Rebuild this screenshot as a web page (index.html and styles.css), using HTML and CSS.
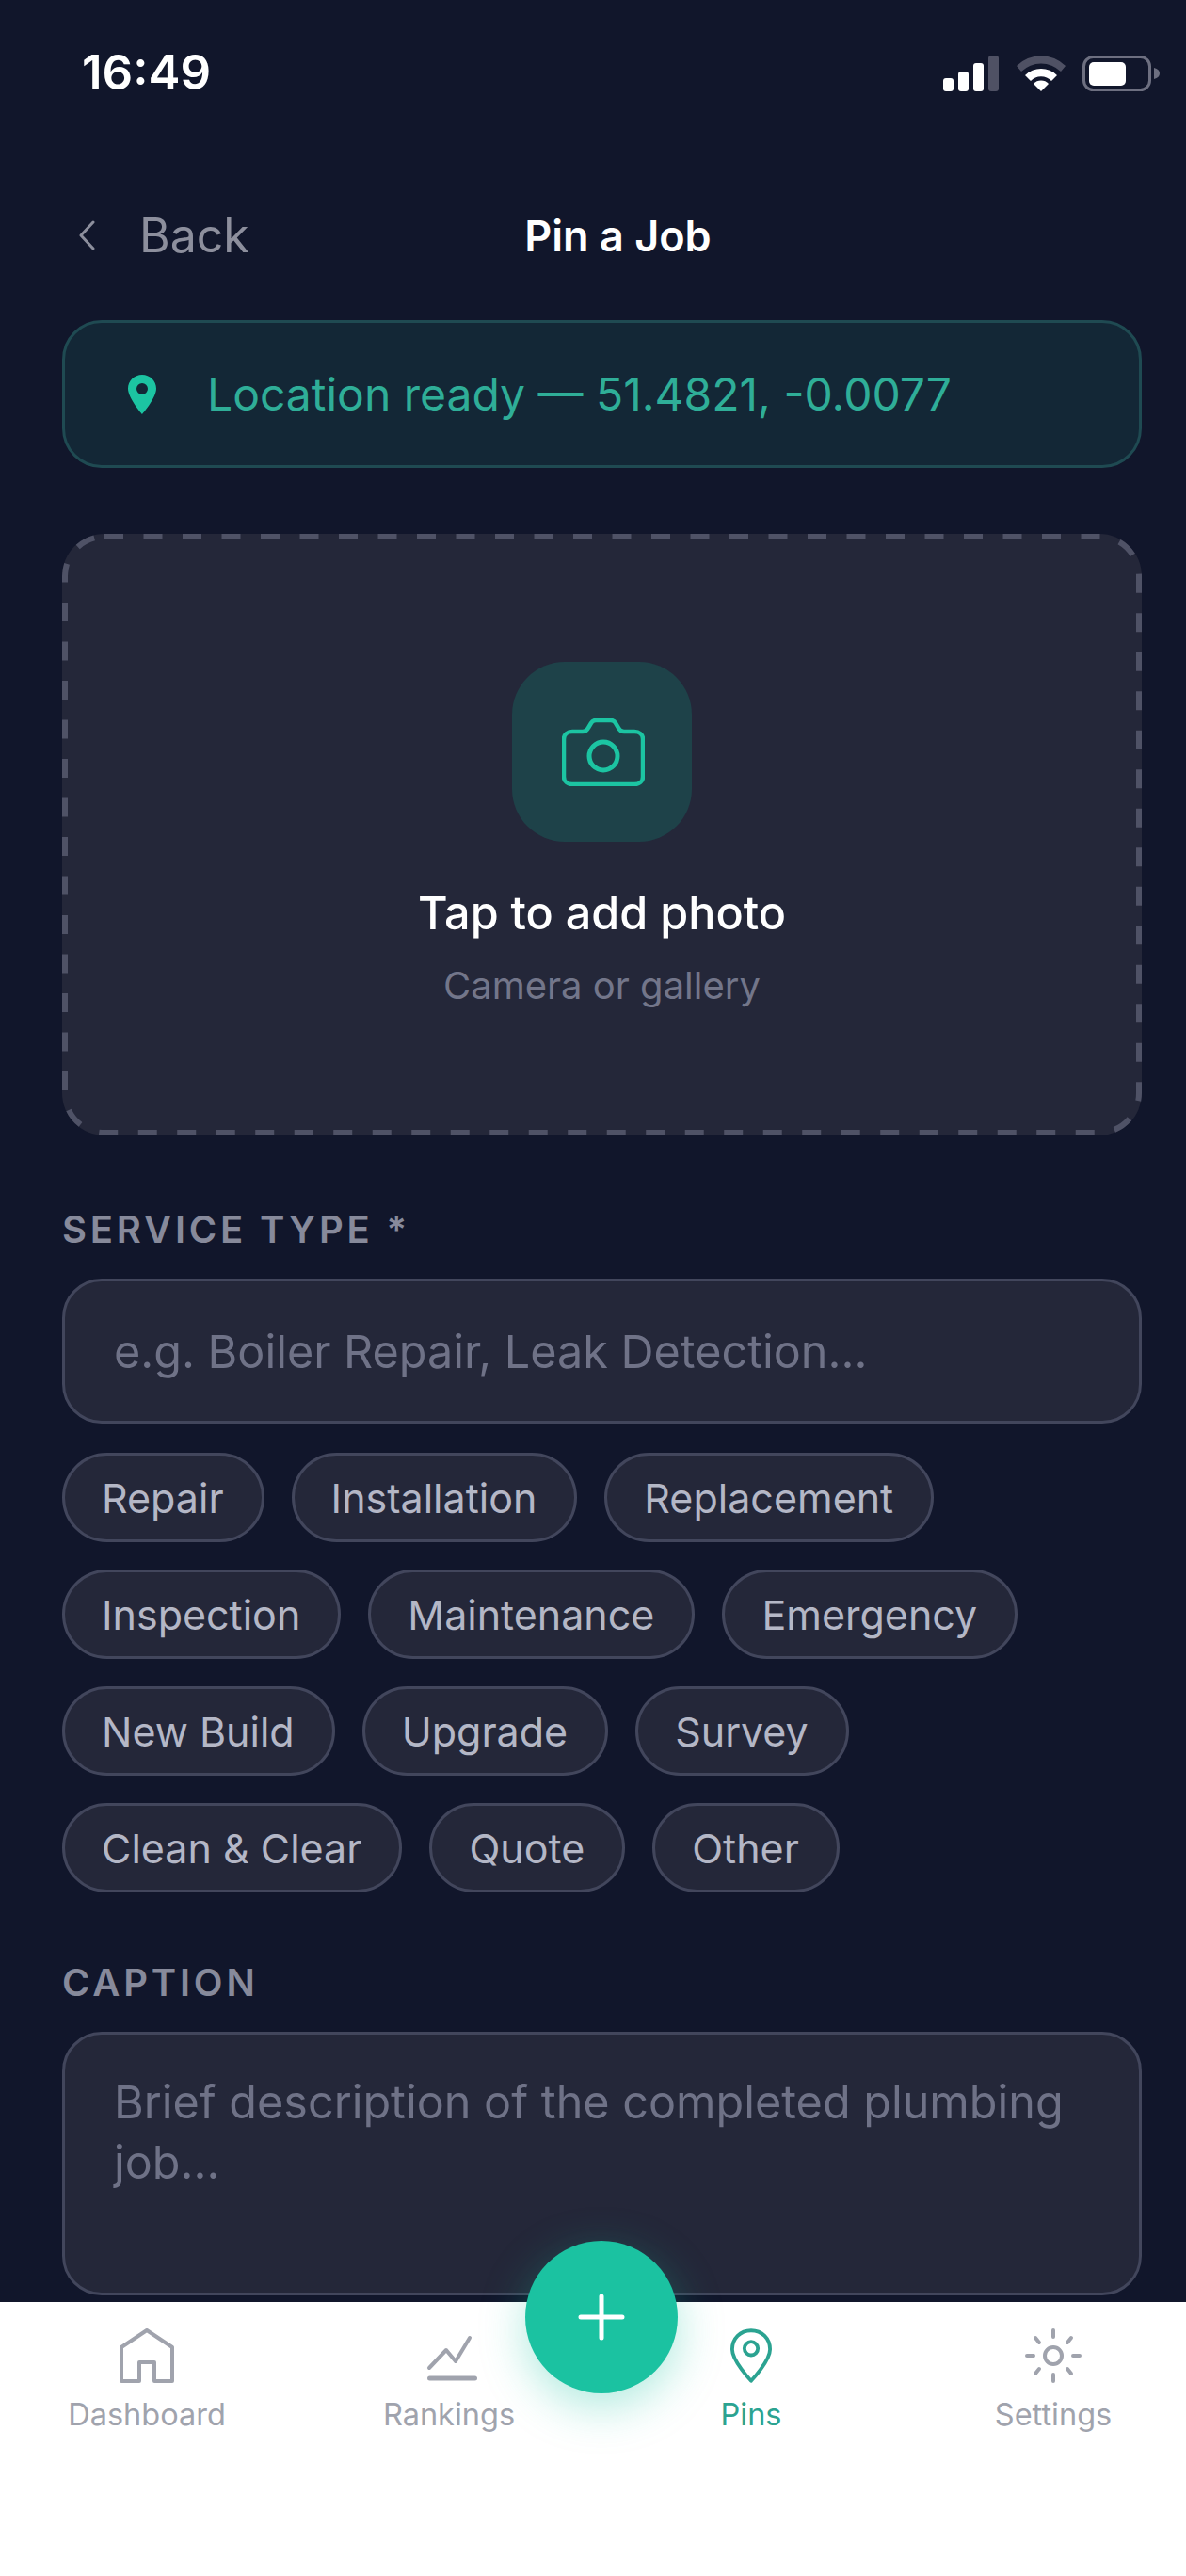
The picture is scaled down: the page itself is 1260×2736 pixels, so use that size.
FILE: index.html
```html
<!DOCTYPE html>
<html lang="en">
  <head>
    <meta charset="UTF-8" />
    <meta name="viewport" content="width=device-width, initial-scale=1.0" />
    <title>Pin a Job</title>
    <link rel="stylesheet" href="styles.css">
  </head>
  <body>
    <div class="screen">
      <main class="content">
        <div class="status-bar">
          <span class="time">16:49</span>
          <div class="status-icons">
            <svg width="60" height="38" viewBox="0 0 60 38">
              <rect x="0" y="24" width="11" height="14" rx="3" fill="#fff" />
              <rect x="16" y="17" width="11" height="21" rx="3" fill="#fff" />
              <rect x="32" y="8" width="11" height="30" rx="3" fill="#fff" />
              <rect x="48" y="0" width="11" height="38" rx="3" fill="#4f5164" />
            </svg>
            <svg width="52" height="38" viewBox="0 0 52 38">
              <path d="M0 11 A37 37 0 0 1 52 11 L47 17 A30 30 0 0 0 5 17 Z" fill="#4f5164" />
              <path d="M9 21 A24 24 0 0 1 43 21 L37 27 A15 15 0 0 0 15 27 Z" fill="#fff" />
              <path d="M18 30 A11 11 0 0 1 34 30 L26 38 Z" fill="#fff" />
            </svg>
            <svg width="82" height="38" viewBox="0 0 82 38">
              <rect x="1.5" y="1.5" width="70" height="35" rx="10" fill="none" stroke="#6d6f80" stroke-width="3" />
              <rect x="7" y="7" width="39" height="25" rx="5" fill="#fff" />
              <path d="M76 13 C80 14 82 16 82 19 C82 22 80 24 76 25 Z" fill="#6d6f80" />
            </svg>
          </div>
        </div>

        <header class="nav">
          <a class="back">
            <svg width="20" height="34" viewBox="0 0 20 34">
              <path d="M17 3 L4 17 L17 31" fill="none" stroke="#8d8f9d" stroke-width="3" stroke-linecap="round" stroke-linejoin="round" />
            </svg>
            <span>Back</span>
          </a>
          <h1>Pin a Job</h1>
        </header>

        <div class="location">
          <svg width="30" height="42" viewBox="0 0 30 42">
            <path fill-rule="evenodd" d="M15 0 C6.7 0 0 6.6 0 14.8 C0 25 15 42 15 42 C15 42 30 25 30 14.8 C30 6.6 23.3 0 15 0 Z M15 9 A6 6 0 1 1 15 21 A6 6 0 1 1 15 9 Z" fill="#1cc4a2" />
          </svg>
          <span>Location ready — 51.4821, -0.0077</span>
        </div>

        <div class="photo-box">
          <svg class="photo-dash" width="1147" height="639" viewBox="0 0 1147 639">
            <rect x="3" y="3" width="1141" height="633" rx="42" fill="none" stroke="#4f5266" stroke-width="6" stroke-dasharray="20 21.5" />
          </svg>
          <div class="photo-icon">
            <svg width="88" height="72" viewBox="0 0 88 72">
              <path d="M11 14 H22 C25 14 27 12 28 10 L31 5 C32 3 34 2 36 2 H52 C54 2 56 3 57 5 L60 10 C61 12 63 14 66 14 H77 C82 14 86 17 86 22 V62 C86 67 82 70 77 70 H11 C6 70 2 67 2 62 V22 C2 17 6 14 11 14 Z" fill="none" stroke="#1cc4a2" stroke-width="4.5" stroke-linejoin="round" />
              <circle cx="44" cy="40" r="15" fill="none" stroke="#1cc4a2" stroke-width="5" />
            </svg>
          </div>
          <p class="photo-title">Tap to add photo</p>
          <p class="photo-sub">Camera or gallery</p>
        </div>

        <label class="field-label">SERVICE TYPE *</label>
        <input class="field" type="text" placeholder="e.g. Boiler Repair, Leak Detection..." />

        <div class="chips">
          <span class="chip">Repair</span>
          <span class="chip">Installation</span>
          <span class="chip">Replacement</span>
          <span class="chip">Inspection</span>
          <span class="chip">Maintenance</span>
          <span class="chip">Emergency</span>
          <span class="chip">New Build</span>
          <span class="chip">Upgrade</span>
          <span class="chip">Survey</span>
          <span class="chip">Clean &amp; Clear</span>
          <span class="chip">Quote</span>
          <span class="chip">Other</span>
        </div>

        <label class="field-label caption-label">CAPTION</label>
        <textarea class="field field-area" placeholder="Brief description of the completed plumbing job..."></textarea>
      </main>

      <nav class="tabbar">
        <a class="tab">
          <svg width="60" height="58" viewBox="0 0 60 58">
            <path d="M3 20 L30 2 L57 20 V56 H38 V36 H22 V56 H3 Z" fill="none" stroke="#a0a3ad" stroke-width="4" stroke-linejoin="round" />
          </svg>
          <span>Dashboard</span>
        </a>
        <a class="tab">
          <svg width="60" height="58" viewBox="0 0 60 58">
            <path d="M9 42 L27 23 L37 35 L52 10" fill="none" stroke="#a0a3ad" stroke-width="4" stroke-linecap="round" stroke-linejoin="round" />
            <path d="M9.5 53 H57.5" fill="none" stroke="#a0a3ad" stroke-width="5" stroke-linecap="round" />
          </svg>
          <span>Rankings</span>
        </a>
        <a class="tab tab-active">
          <svg width="44" height="60" viewBox="0 0 46 60">
            <path d="M23 2 C11 2 2 11 2 23 C2 36 23 58 23 58 C23 58 44 36 44 23 C44 11 35 2 23 2 Z" fill="none" stroke="#2ba391" stroke-width="4" stroke-linejoin="round" />
            <circle cx="23" cy="22" r="7.5" fill="none" stroke="#2ba391" stroke-width="4" />
          </svg>
          <span>Pins</span>
        </a>
        <a class="tab">
          <svg width="60" height="58" viewBox="0 0 60 58">
            <circle cx="30" cy="29" r="9" fill="none" stroke="#a0a3ad" stroke-width="4" />
            <path d="M30 2 V9 M30 49 V56 M2 29 H9 M51 29 H58 M11 10 L15 15 M49 10 L45 15 M11 48 L15 43 M49 48 L45 43" fill="none" stroke="#a0a3ad" stroke-width="4" stroke-linecap="round" />
          </svg>
          <span>Settings</span>
        </a>
      </nav>

      <button class="fab" aria-label="Add pin">
        <svg width="50" height="50" viewBox="0 0 50 50">
          <path d="M25 3 V47 M3 25 H47" fill="none" stroke="#fff" stroke-width="5" stroke-linecap="round" />
        </svg>
      </button>
    </div>
  </body>
</html>
```

FILE: styles.css
```css
* {
  box-sizing: border-box;
}
body {
  margin: 0;
  padding: 0;
  font-family: "Inter", "Liberation Sans", sans-serif;
  background-color: #11162b;
}
.screen {
  position: relative;
  width: 1260px;
  height: 2736px;
  display: flex;
  flex-direction: column;
  overflow: hidden;
  background-color: #11162b;
}
.content {
  height: 2445px;
  padding: 0 47px 0 66px;
  display: flex;
  flex-direction: column;
  overflow: hidden;
  flex-shrink: 0;
}

/* status bar */
.status-bar {
  height: 156px;
  flex-shrink: 0;
  display: flex;
  align-items: center;
  justify-content: space-between;
  padding: 0 0 0 21px;
}
.time {
  margin-top: -4px;
  color: white;
  font-size: 51px;
  font-weight: 600;
}
.status-icons {
  display: flex;
  align-items: center;
  gap: 18px;
  margin-right: -19px;
}

/* top nav */
.nav {
  position: relative;
  margin-top: 24px;
  height: 140px;
  flex-shrink: 0;
  display: flex;
  align-items: center;
  justify-content: center;
}
.nav h1 {
  margin: 0;
  padding-left: 34px;
  color: white;
  font-size: 45px;
  font-weight: 600;
}
.back {
  position: absolute;
  left: 16px;
  top: 50px;
  display: flex;
  align-items: center;
  gap: 46px;
  color: #8d8f9d;
  font-size: 50px;
  line-height: 40px;
}

.location {
  margin-top: 20px;
  height: 157px;
  flex-shrink: 0;
  display: flex;
  align-items: center;
  gap: 54px;
  padding-left: 67px;
  background-color: #132736;
  border: 3px solid #1f4a52;
  border-radius: 42px;
  color: #2fae98;
  font-size: 48px;
}

.photo-box {
  position: relative;
  margin-top: 70px;
  height: 639px;
  flex-shrink: 0;
  display: flex;
  flex-direction: column;
  align-items: center;
  padding-top: 136px;
  background-color: #242739;
  border-radius: 45px;
}
.photo-dash {
  position: absolute;
  left: 0;
  top: 0;
}
.photo-icon {
  width: 191px;
  height: 191px;
  display: flex;
  align-items: center;
  justify-content: center;
  background-color: #1e4249;
  border-radius: 56px;
}
.photo-icon svg {
  margin-left: 2px;
}
.photo-title {
  margin: 46px 0 0;
  color: white;
  font-size: 48.5px;
  font-weight: 500;
  line-height: 60px;
}
.photo-sub {
  margin: 22px 0 0;
  color: #73768a;
  font-size: 40px;
  line-height: 50px;
}

.field-label {
  margin-top: 80px;
  height: 40px;
  flex-shrink: 0;
  color: #878a9b;
  font-size: 40px;
  font-weight: 600;
  line-height: 40px;
  letter-spacing: 3.8px;
}
.field {
  display: block;
  width: 100%;
  height: 154px;
  margin-top: 32px;
  flex-shrink: 0;
  padding: 0 52px;
  background-color: #242739;
  border: 3px solid #42465c;
  border-radius: 42px;
  outline: none;
  color: white;
  font-family: "Inter", sans-serif;
  font-size: 48.5px;
}
.field::placeholder {
  color: #6f7287;
  opacity: 1;
}
.field-area {
  height: 280px;
  padding-top: 40px;
  line-height: 64px;
  resize: none;
}

.chips {
  margin-top: 31px;
  display: flex;
  flex-wrap: wrap;
  gap: 29px;
}
.chip {
  height: 95px;
  display: flex;
  align-items: center;
  padding: 0 40px 0 39px;
  background-color: #242739;
  border: 3px solid #42465c;
  border-radius: 48px;
  color: #b4b7c6;
  font-size: 43px;
}
.caption-label {
  margin-top: 76px;
}

/* bottom tabs */
.tabbar {
  flex: 1;
  display: flex;
  justify-content: flex-start;
  gap: 81px;
  padding: 28px 0 0 36px;
  background-color: white;
}
.tab {
  width: 240px;
  display: flex;
  flex-direction: column;
  align-items: center;
  gap: 14px;
  color: #a0a3ad;
  font-size: 32.5px;
}
.tab svg {
  height: 58px;
}
.tab-active {
  color: #2ba391;
}
.fab {
  position: absolute;
  left: 558px;
  top: 2380px;
  width: 162px;
  height: 162px;
  display: flex;
  align-items: center;
  justify-content: center;
  padding: 0;
  border: none;
  border-radius: 50%;
  background-color: #1bc2a1;
  box-shadow: 0 14px 48px rgba(27, 194, 161, 0.35);
}
```
